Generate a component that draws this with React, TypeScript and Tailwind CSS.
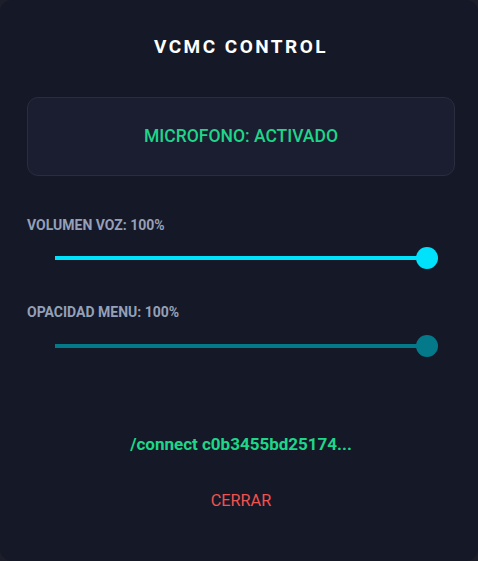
import { useState } from "react";

function Slider({
  value,
  color,
  onChange,
}: {
  value: number;
  color: string;
  onChange: (v: number) => void;
}) {
  return (
    <div className="relative ml-[55px] mr-[51px] h-[24px] flex items-center">
      <div className="w-full h-[4px]" style={{ backgroundColor: color }} />
      <div
        className="absolute top-1/2 -translate-y-1/2 -translate-x-1/2 w-[22px] h-[22px] rounded-full"
        style={{ left: `${value}%`, backgroundColor: color }}
      />
      <input
        type="range"
        min={0}
        max={100}
        value={value}
        onChange={(e) => onChange(Number(e.target.value))}
        className="absolute inset-0 w-full opacity-0 cursor-pointer"
      />
    </div>
  );
}

export default function App() {
  const [volume, setVolume] = useState(100);
  const [opacity, setOpacity] = useState(100);

  return (
    <div
      className="w-[478px] h-[561px] bg-[#1c1e2a] overflow-hidden"
      style={{ fontFamily: "Roboto, 'Liberation Sans', sans-serif" }}
    >
      <div className="w-full h-full bg-[#151827] rounded-[12px] flex flex-col">
        <h1 className="mt-[36px] text-center text-white text-[19px] font-bold tracking-[0.13em] leading-[22px] pl-[4px]">
          VCMC CONTROL
        </h1>

        <div className="mt-[39px] ml-[27px] mr-[23px] h-[79px] rounded-[11px] border border-[#2a2d3e] bg-[#1b1d30] flex items-center justify-center">
          <span className="text-[#1ed68a] text-[17.5px] font-medium">
            MICROFONO: ACTIVADO
          </span>
        </div>

        <p className="mt-[40px] ml-[27px] text-[#94a0b8] text-[14px] font-bold leading-[18px]">
          VOLUMEN VOZ: {volume}%
        </p>
        <div className="mt-[12px]">
          <Slider value={volume} color="#00e1fb" onChange={setVolume} />
        </div>

        <p className="mt-[33px] ml-[27px] text-[#94a0b8] text-[14px] font-bold leading-[18px]">
          OPACIDAD MENU: {opacity}%
        </p>
        <div className="mt-[13px]">
          <Slider value={opacity} color="#03798a" onChange={setOpacity} />
        </div>

        <p className="mt-[76px] text-center text-[#1ed68a] text-[17px] font-bold leading-[20px] pl-[4px]">
          /connect c0b3455bd25174...
        </p>

        <button className="mt-[37px] self-center ml-[4px] text-[#ef5350] text-[16.3px] leading-[20px]">
          CERRAR
        </button>
      </div>
    </div>
  );
}
